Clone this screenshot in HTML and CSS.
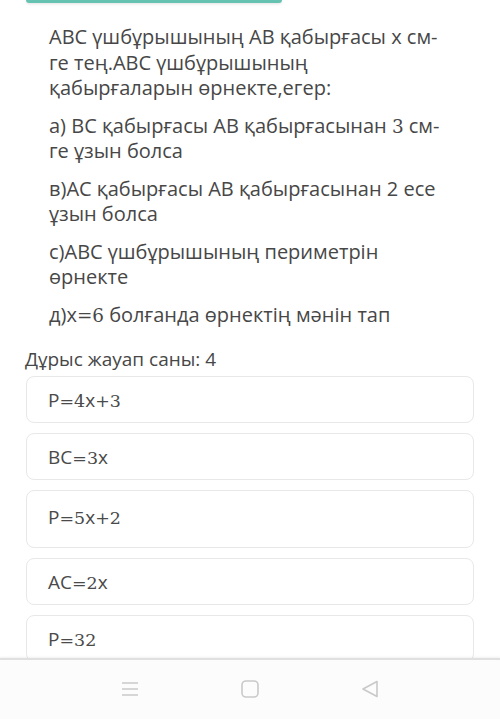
FILE: index.html
```html
<!DOCTYPE html>
<html lang="kk">
<head>
    <meta charset="UTF-8">
    <meta name="viewport" content="width=device-width, initial-scale=1.0">
    <title>Тест сұрағы</title>
    <link rel="stylesheet" href="styles.css">
</head>
<body>

<div class="screen">
    <div class="tab-strip"></div>

    <div class="question">
        <p>ABC үшбұрышының AB қабырғасы x см-ге тең.ABC үшбұрышының қабырғаларын өрнекте,егер:</p>
        <p>а) BC қабырғасы AB қабырғасынан <span class="math">3</span> см-<br>ге ұзын болса</p>
        <p>в)AC қабырғасы AB қабырғасынан 2 есе ұзын болса</p>
        <p>c)ABC үшбұрышының периметрін өрнекте</p>
        <p>д)x<span class="math">=6</span> болғанда өрнектің мәнін тап</p>
    </div>

    <div class="answer-count">Дұрыс жауап саны: 4</div>

    <ul class="options">
        <li class="option">P<span class="math">=4</span>x<span class="math">+3</span></li>
        <li class="option">BC<span class="math">=3</span>x</li>
        <li class="option option-tall">P<span class="math">=5</span>x<span class="math">+2</span></li>
        <li class="option">AC<span class="math">=2</span>x</li>
        <li class="option">P<span class="math">=32</span></li>
    </ul>
</div>

<nav class="system-nav">
    <svg class="nav-icon" width="18" height="16" viewBox="0 0 18 16">
        <path d="M1 2h16M1 8h16M1 14h16" />
    </svg>
    <svg class="nav-icon" width="18" height="18" viewBox="0 0 18 18">
        <rect x="1" y="1" width="16" height="16" rx="4" />
    </svg>
    <svg class="nav-icon" width="18" height="18" viewBox="0 0 18 18">
        <path d="M16 1.5L2 9l14 7.5z" stroke-linejoin="round" />
    </svg>
</nav>

</body>
</html>
```

FILE: styles.css
```css
html, body {
    margin: 0;
    padding: 0;
    height: 100%;
}
body {
    font-family: 'Open Sans', 'DejaVu Sans', sans-serif;
    background: #fff;
    color: #474747;
    display: flex;
    flex-direction: column;
    overflow: hidden;
}
.screen {
    flex: 1;
    overflow: hidden;
    padding: 0 26px;
}
.tab-strip {
    width: 256px;
    height: 3px;
    background: #67c3b1;
    border-radius: 0 0 4px 4px;
    box-shadow: 0 1px 3px rgba(0, 0, 0, 0.12);
}
.question {
    padding: 21px 24px 0 23px;
    font-size: 20px;
    line-height: 25.5px;
}
.question p {
    margin: 0 0 12px;
}
/* formula parts are set in a serif face, like the rendered TeX */
.math {
    font-family: 'DejaVu Serif', 'Liberation Serif', serif;
    font-size: 0.92em;
    line-height: 1;
}
.answer-count {
    margin-top: 20px;
    font-size: 19px;
    line-height: 24px;
    margin-left: -1px;
}
.options {
    list-style: none;
    margin: 5px 0 0;
    padding: 0;
    display: flex;
    flex-direction: column;
    gap: 10px;
}
.option {
    height: 47px;
    box-sizing: border-box;
    padding: 11px 21px 0;
    border: 1.5px solid #e8e8e8;
    border-radius: 8px;
    font-size: 19px;
    line-height: 24px;
    color: #4a4a4a;
}
.option-tall {
    height: 58px;
    padding-top: 14px;
}
.system-nav {
    height: 61px;
    flex-shrink: 0;
    box-sizing: border-box;
    border-top: 2px solid #e0e0e0;
    box-shadow: 0 -1px 2px rgba(0, 0, 0, 0.06);
    background: #fcfcfc;
    display: flex;
    justify-content: center;
    align-items: center;
    gap: 102px;
    padding-bottom: 2px;
}
.nav-icon {
    fill: none;
    stroke: #c9c9c9;
    stroke-width: 1.6;
}
```
